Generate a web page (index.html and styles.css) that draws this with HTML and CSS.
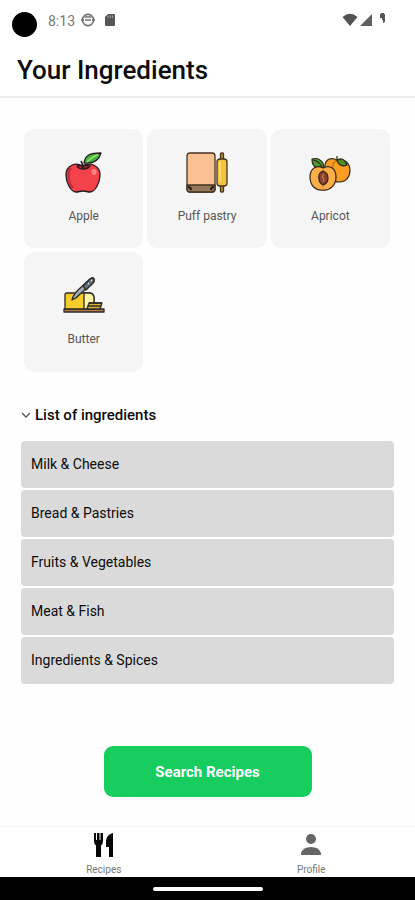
FILE: index.html
```html
<!DOCTYPE html>
<html lang="en">
<head>
<meta charset="utf-8">
<meta name="viewport" content="width=device-width, initial-scale=1">
<title>Your Ingredients</title>
<link rel="stylesheet" href="styles.css">
</head>
<body>
<header class="top">
  <div class="status">
    <span class="camera"></span>
    <span class="time">8:13</span>
    <svg class="face" width="16" height="14" viewBox="0 0 16 14" fill="none" stroke="#707070" stroke-width="1.6"><circle cx="8" cy="7" r="5.6"/><path d="M1 7h3M12 7h3M5 7h6M4.500 4h7"/></svg>
    <svg class="card-icon" width="12" height="14" viewBox="0 0 12 14"><path d="M4 1h6q1 0 1 1v10q0 1-1 1H2q-1 0-1-1V4z" fill="#565656"/><path d="M4 2.500v2.500M6.300 2.500v2.500M8.600 2.500v2.500" stroke="#aaa"/></svg>
    <span class="signals">
      <svg width="16" height="14" viewBox="0 0 16 14"><path d="M0.500 4Q8-2.500 15.500 4L8 13z" fill="#525252"/></svg>
      <svg width="14" height="14" viewBox="0 0 14 14"><path d="M13 1v12H1z" fill="#606060"/></svg>
      <svg class="battery" width="8" height="14" viewBox="0 0 8 14"><path d="M1 1h1V0h3v1h1v8L4 10V7H3V5H1z" fill="#555"/></svg>
    </span>
  </div>
  <h1>Your Ingredients</h1>
</header>
<main>
  <ul class="cards">
    <li class="card">
      <svg width="42" height="42" viewBox="0 0 42 42" stroke="#251b20" stroke-width="1.300" stroke-linejoin="round">
        <path d="M19 14C13 10 3 13 3 23c0 8 5 17 10 17 3 0 4-1 7-1s4 1 7 1c5 0 10-9 10-17 0-10-10-13-18-9z" fill="#f3424a"/>
        <path d="M8 16c-4 4-3 14 2 20" fill="none" stroke="#bd2936" stroke-width="2"/>
        <path d="M14 14c2 4 10 4 13 0-3-1-5-1-7 0-2-1-4-1-6 0z" fill="#9c2530"/>
        <path d="M20 16q0-4-2-7" fill="none" stroke-width="1.600"/>
        <path d="M21 11C22 3 27 1 38 1c-2 7-8 11-17 10z" fill="#3eb649"/>
        <path d="M24 10q6-6 11-7" fill="none" stroke="#9ce35a" stroke-width="1.500"/>
        <ellipse cx="31" cy="20" rx="2.500" ry="3" fill="#ff8584" stroke="none"/>
      </svg>
      <span>Apple</span>
    </li>
    <li class="card">
      <svg width="42" height="42" viewBox="0 0 42 42" stroke="#44331f" stroke-width="1.300" stroke-linejoin="round">
        <path d="M4 1h22q3 0 3 3v33q0 3-3 3H4q-3 0-3-3V4q0-3 3-3z" fill="#f9c092"/>
        <path d="M1 33h28v4q0 3-3 3H4q-3 0-3-3z" fill="#94765b"/>
        <path d="M2 35q3 0 3 3M28 35q-3 0-3 3" fill="none" stroke="#221c17" stroke-width="2"/>
        <rect x="34.500" y="1" width="3" height="39" rx="1" fill="#b99128"/>
        <rect x="31" y="7" width="10" height="27" rx="3" fill="#f2c33d"/>
        <path d="M34 10v20" stroke="#ffda66" stroke-width="2"/>
      </svg>
      <span>Puff pastry</span>
    </li>
    <li class="card">
      <svg width="42" height="42" viewBox="0 0 42 42" stroke="#30261b" stroke-width="1.200" stroke-linejoin="round">
        <path d="M28 8C20 4 15 9 16 17c1 8 8 13 14 13 7 0 11-5 11-12S35 6 28 8z" fill="#fb9e22"/>
        <path d="M27 8q-6 6-2 16" fill="none" stroke="#c26f17"/>
        <path d="M28 9V4M28 9c3-4 8-2 10 4q-6 3-10-4z" fill="#4b8f28"/>
        <path d="M15 16Q3 18 3 7q7-2 11 4z" fill="#4b9b31"/>
        <path d="M4 8q6 1 9 7" fill="none"/>
        <path d="M14 16C6 12 1 18 1 25c0 9 6 14 13 13 7 1 13-5 13-13 0-8-6-13-13-9z" fill="#fbb047"/>
        <path d="M14 17v21" fill="none" stroke="#dc8930"/>
        <path d="M14 19c-3 1-5 4-4 8 0 3 2 5 4 6 3-1 5-4 5-7 0-4-2-6-5-7z" fill="#87402d"/>
        <path d="M15 22l-2 3 2 2-1 3" fill="none" stroke="#c77951"/>
      </svg>
      <span>Apricot</span>
    </li>
    <li class="card">
      <svg width="42" height="42" viewBox="0 0 42 42" stroke="#2f2b23" stroke-width="1.300" stroke-linejoin="round">
        <rect x="1" y="34" width="40" height="3" fill="#b77a50"/>
        <path d="M2 34V20q0-2 2-2h23q4 1 4 5v11z" fill="#f5cc29"/>
        <path d="M21 18h6q4 1 4 5v11H21z" fill="#fff2a5"/>
        <path d="M24 34l2-6h13l-2 6z" fill="#d5b936"/>
        <path d="M26 28h13M25 31h13" fill="none"/>
        <path d="M9 25q1-5 6-10L27 4q3-2 4 0t-2 5L17 19q-3 4-8 6z" fill="#9eadb8"/>
        <path d="M20 11l7-7q3-2 4 0t-2 5l-6 6z" fill="#66717c"/>
        <path d="M25 9l1-1M28 6l1-1" stroke="#dce1e5"/>
      </svg>
      <span>Butter</span>
    </li>
  </ul>
  <details class="groups" open>
    <summary><svg width="10" height="10" viewBox="0 0 10 10" fill="none" stroke="#555" stroke-width="1.300"><path d="M1 3l4 4 4-4"/></svg>List of ingredients</summary>
    <div class="list">
      <button type="button">Milk &amp; Cheese</button>
      <button type="button">Bread &amp; Pastries</button>
      <button type="button">Fruits &amp; Vegetables</button>
      <button type="button">Meat &amp; Fish</button>
      <button type="button">Ingredients &amp; Spices</button>
    </div>
  </details>
  <button class="search" type="button">Search Recipes</button>
</main>
<nav class="tabs">
  <a href="#recipes"><svg width="20" height="26" viewBox="0 0 20 26" fill="#050505"><path d="M0 1h2v7h1V1h2.500v7h1V1H9v8q0 3-2 4.500V25H2V13.500Q0 12 0 9z"/><path d="M19 1v24h-4V15h-3V9q1-7 7-8z"/></svg><span>Recipes</span></a>
  <a href="#profile"><svg width="24" height="26" viewBox="0 0 24 26" fill="#666"><circle cx="12" cy="7" r="5"/><path d="M2 23v-2q2-6 10-6t10 6v2z"/></svg><span>Profile</span></a>
</nav>
<footer class="system"><span class="handle"></span></footer>
</body>
</html>
```
FILE: styles.css
```css
* { box-sizing: border-box; }
body {
  margin: 0;
  min-height: 100vh;
  display: flex;
  flex-direction: column;
  background: #fefefe;
  color: #0c0c0c;
  font-family: Roboto, "Liberation Sans", sans-serif;
}
button { border: 0; font: inherit; color: inherit; }
svg { display: block; flex: none; }

.top {
  padding: 8px 16px 10px 12px;
  background: #fff;
  border-bottom: 2px solid #ececec;
}
.status { display: flex; align-items: center; height: 32px; }
.camera { width: 25px; height: 25px; border-radius: 50%; background: #000; margin-top: 1px; }
.time { margin: 0 5px 6px 11px; font-size: 14px; line-height: 16px; color: #777; }
.face, .card-icon, .signals { margin-bottom: 8px; }
.card-icon { margin-left: 8px; }
.signals { display: flex; gap: 1px; margin-left: auto; padding-right: 12px; }
.battery { margin-left: 5px; }
h1 { margin: 14px 0 0 5px; font-size: 26px; line-height: 32px; font-weight: 500; }

main { flex: 1; display: flex; flex-direction: column; padding: 31px 21px 29px; }
.cards {
  display: grid;
  grid-template-columns: repeat(3, 1fr);
  gap: 4px;
  margin: 0;
  padding: 0 4px 0 3px;
  list-style: none;
}
.card {
  aspect-ratio: 1;
  display: flex;
  flex-direction: column;
  align-items: center;
  padding-top: 23px;
  gap: 14px;
  border-radius: 10px;
  background: #f5f5f5;
  font-size: 12px;
  line-height: 16px;
  color: #555;
}
.groups { margin-top: 33px; }
summary {
  display: flex;
  align-items: center;
  gap: 4px;
  list-style: none;
  font-size: 15px;
  line-height: 20px;
  font-weight: 500;
}
.list { display: flex; flex-direction: column; gap: 2px; margin-top: 16px; }
.list button {
  height: 47px;
  padding: 0 10px;
  border-radius: 4px;
  background: #dadada;
  font-size: 14px;
  text-align: left;
}
.search {
  width: 208px;
  height: 51px;
  margin: auto auto 0;
  border-radius: 9px;
  background: #16cd5e;
  color: #fff;
  font-size: 15px;
  font-weight: 700;
}
.tabs { display: flex; height: 51px; background: #fff; border-top: 1px solid #f3f3f3; }
.tabs a {
  flex: 1;
  display: flex;
  flex-direction: column;
  align-items: center;
  padding-top: 5px;
  gap: 6px;
  font-size: 10px;
  line-height: 12px;
  color: #777;
  text-decoration: none;
}
.system { display: flex; align-items: center; justify-content: center; height: 23px; background: #000; }
.handle { width: 110px; height: 4px; border-radius: 2px; background: #fff; }
```
